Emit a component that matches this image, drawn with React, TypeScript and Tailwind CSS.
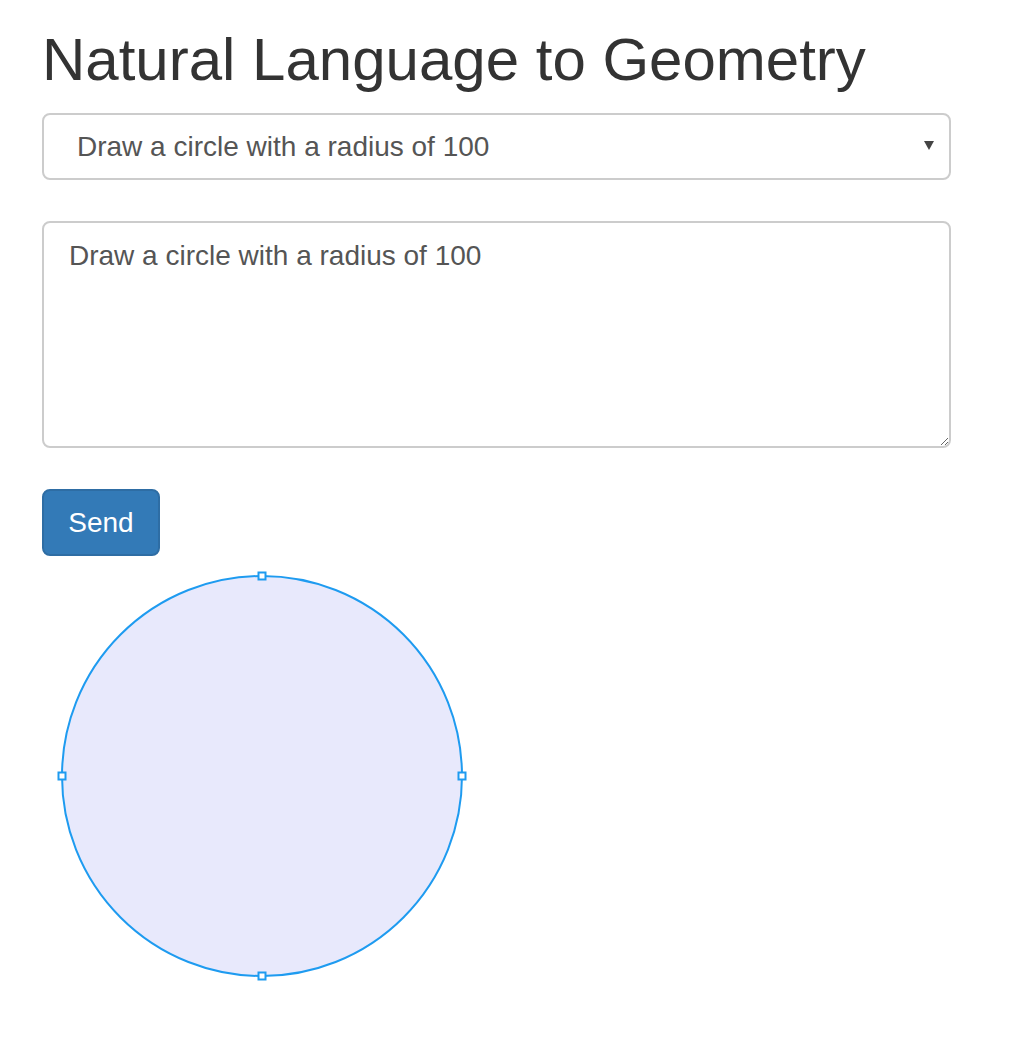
import React, { useState } from "react";

const PROMPTS = [
  "Draw a circle with a radius of 100",
  "Draw a square with a side of 100",
  "Draw a line from 0,0 to 100,100",
];

function Handle({ x, y }: { x: number; y: number }) {
  return <rect x={x - 3.5} y={y - 3.5} width={7} height={7} fill="#fff" stroke="#1e9bf0" strokeWidth={2} />;
}

export default function App() {
  const [prompt, setPrompt] = useState(PROMPTS[0]);
  const [text, setText] = useState(PROMPTS[0]);

  return (
    <div className="min-h-[1046px] bg-white font-['Liberation_Sans',Arial,sans-serif] text-[#333]">
      <div className="w-[951px] pl-[42px] pt-[20px]">
        <h1 className="whitespace-nowrap text-[60px] leading-[80px] font-normal">Natural Language to Geometry</h1>

        <div className="relative mt-[13px]">
          <select
            value={prompt}
            onChange={(e) => {
              setPrompt(e.target.value);
              setText(e.target.value);
            }}
            className="h-[67px] w-full appearance-none rounded-[8px] border-2 border-[#ccc] bg-white pl-[33px] text-[28px] text-[#555] outline-none"
          >
            {PROMPTS.map((p) => (
              <option key={p}>{p}</option>
            ))}
          </select>
          {/* dropdown caret */}
          <svg width="10" height="9" viewBox="0 0 10 9" className="pointer-events-none absolute right-[17px] top-[28px] block">
            <path d="M0 0 H10 L5 9 Z" fill="#444" />
          </svg>
        </div>

        <textarea
          value={text}
          onChange={(e) => setText(e.target.value)}
          className="mt-[41px] block h-[227px] w-full rounded-[8px] border-2 border-[#ccc] px-[25px] py-[15px] text-[28px] leading-[36px] text-[#555] outline-none"
        />

        <button className="mt-[41px] h-[67px] w-[118px] rounded-[8px] border-2 border-[#2e6da4] bg-[#337ab7] text-[28px] text-white">
          Send
        </button>

        <svg width="440" height="420" viewBox="0 0 440 420" className="mt-[10px] block">
          <circle cx={220} cy={210} r={200} fill="#e8e9fc" stroke="#1e9bf0" strokeWidth={2} />
          <Handle x={220} y={10} />
          <Handle x={220} y={410} />
          <Handle x={20} y={210} />
          <Handle x={420} y={210} />
        </svg>
      </div>
    </div>
  );
}
